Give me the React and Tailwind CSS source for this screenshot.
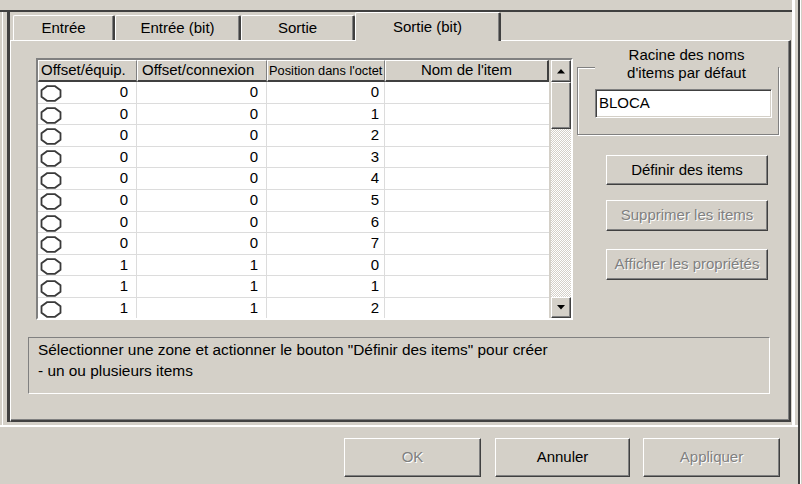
const rows = [
  [0, 0, 0],
  [0, 0, 1],
  [0, 0, 2],
  [0, 0, 3],
  [0, 0, 4],
  [0, 0, 5],
  [0, 0, 6],
  [0, 0, 7],
  [1, 1, 0],
  [1, 1, 1],
  [1, 1, 2],
];

const raised =
  "bg-[#d4d0c8] border-t border-l border-t-white border-l-white border-r border-b border-r-[#404040] border-b-[#404040] shadow-[inset_-1px_-1px_0_#808080]";

const disabledText = "text-[#808080] [text-shadow:1px_1px_0_#ffffff]";

function Octagon() {
  return (
    <svg width="22" height="17" viewBox="0 0 22 17" className="shrink-0">
      <polygon
        points="7,1.2 15,1.2 20.5,5.2 20.5,11.8 15,15.8 7,15.8 1.5,11.8 1.5,5.2"
        fill="#ffffff"
        stroke="#3a3a3a"
        strokeWidth="1.8"
      />
    </svg>
  );
}

function Arrow({ down }) {
  return (
    <svg width="8" height="5" viewBox="0 0 8 5">
      {down ? (
        <polygon points="0,0 8,0 4,4.5" fill="#000" />
      ) : (
        <polygon points="0,4.5 8,4.5 4,0" fill="#000" />
      )}
    </svg>
  );
}

function Tab({ label, className }) {
  return (
    <div
      className={`flex items-center justify-center bg-[#d4d0c8] border-t border-l border-t-white border-l-white border-r-2 border-r-[#404040] shadow-[inset_-1px_0_0_#808080] rounded-t-[2px] ${className}`}
    >
      {label}
    </div>
  );
}

export default function App() {
  return (
    <div className="flex w-[802px] h-[484px] overflow-hidden bg-[#d4d0c8] text-black text-[15px] font-['Liberation_Sans',Arial,sans-serif]">
      {/* main column */}
      <div className="flex flex-col w-[798px]">
        {/* top area with tab control */}
        <div className="flex h-[427px] border-b-2 border-b-white">
          <div className="w-[792px] pt-[10px]">
            <div className="flex h-[415px] border-t-2 border-t-[#404040]">
              <div className="w-[2px]" />
              <div className="w-px bg-white" />
              <div className="w-[4px]" />
              <div className="w-[3px] h-[410px] bg-[#404040]" />

              <div className="flex flex-col w-[782px]">
                {/* tabs */}
                <div className="flex items-start h-[28px] pl-[3px]">
                  <Tab label="Entrée" className="w-[102px] h-[25px] mt-[3px]" />
                  <Tab label="Entrée (bit)" className="w-[126px] h-[25px] mt-[3px]" />
                  <Tab label="Sortie" className="w-[114px] h-[25px] mt-[3px]" />
                  <Tab label="Sortie (bit)" className="relative z-10 w-[146px] h-[29px]" />
                </div>

                {/* panel */}
                <div className="w-[781px] h-[382px] border-t border-l border-t-white border-l-white border-r-2 border-b-2 border-r-[#404040] border-b-[#404040] shadow-[inset_-1px_-1px_0_#808080]">
                  <div className="flex items-start pt-[5px] pl-[25px]">
                    {/* list */}
                    <div className="mt-[12px] w-[537px] h-[262px] flex border-t-2 border-l-2 border-t-[#808080] border-l-[#808080] border-r-2 border-b-2 border-r-white border-b-white bg-white">
                      <div className="flex flex-col w-[511px]">
                        <div className="flex h-[22px] bg-[#d4d0c8]">
                          <div className="w-[99px] pl-[2px] flex items-center border-t border-l border-t-white border-l-white border-r border-r-[#808080] border-b-2 border-b-[#404040] whitespace-nowrap">
                            Offset/équip.
                          </div>
                          <div className="w-[130px] pl-[4px] flex items-center border-t border-l border-t-white border-l-white border-r border-r-[#808080] border-b-2 border-b-[#404040] whitespace-nowrap">
                            Offset/connexion
                          </div>
                          <div className="w-[118px] pl-[1px] flex items-center border-t border-l border-t-white border-l-white border-r border-r-[#808080] border-b-2 border-b-[#404040] whitespace-nowrap text-[12.8px] overflow-hidden">
                            Position dans l'octet
                          </div>
                          <div className="w-[164px] flex items-center justify-center border-t border-l border-t-white border-l-white border-r-2 border-r-[#404040] border-b-2 border-b-[#404040] whitespace-nowrap">
                            Nom de l'item
                          </div>
                        </div>
                        <div className="h-[236px] overflow-hidden">
                          {rows.map((r, i) => (
                            <div key={i} className="flex h-[21.6px] border-b border-b-[#dcdcdc]">
                              <div className="w-[99px] flex items-center justify-between pl-[2px] pr-[8px] border-r border-r-[#dcdcdc]">
                                <span className="mt-[3px]">
                                  <Octagon />
                                </span>
                                <span>{r[0]}</span>
                              </div>
                              <div className="w-[130px] flex items-center justify-end pr-[8px] border-r border-r-[#dcdcdc]">
                                {r[1]}
                              </div>
                              <div className="w-[118px] flex items-center justify-end pr-[5px] border-r border-r-[#dcdcdc]">
                                {r[2]}
                              </div>
                              <div className="w-[164px]" />
                            </div>
                          ))}
                        </div>
                      </div>
                      {/* scrollbar */}
                      <div className="flex flex-col w-[22px] pl-[2px] bg-[#d4d0c8]">
                        <div className={`${raised} h-[22px] flex items-center justify-center`}>
                          <Arrow />
                        </div>
                        <div className="flex-1 flex flex-col bg-[repeating-conic-gradient(#ffffff_0_25%,#d4d0c8_0_50%)] bg-[length:2px_2px]">
                          <div className={`${raised} h-[47px]`} />
                        </div>
                        <div className={`${raised} h-[21px] flex items-center justify-center`}>
                          <Arrow down />
                        </div>
                      </div>
                    </div>

                    {/* right column */}
                    <div className="ml-[4px] w-[201px] flex flex-col">
                      <fieldset className="w-[201px] border border-[#808080] shadow-[inset_1px_1px_0_#ffffff,1px_1px_0_#ffffff] pl-[17px] pb-[16px]">
                        <legend className="mx-auto w-[183px] text-center leading-[18px] pb-[6px] bg-[#d4d0c8]">
                          Racine des noms
                          <br />
                          d'items par défaut
                        </legend>
                        <div className="mt-[1px] w-[177px] h-[29px] flex items-center pl-[3px] bg-white border-t border-l border-t-[#808080] border-l-[#808080] border-r border-b border-r-white border-b-white shadow-[inset_1px_1px_0_#404040,inset_-1px_-1px_0_#d4d0c8]">
                          BLOCA
                        </div>
                      </fieldset>
                      <div className={`${raised} ml-[29px] mt-[20px] w-[162px] h-[30px] flex items-center justify-center`}>
                        Définir des items
                      </div>
                      <div className={`${raised} ${disabledText} ml-[29px] mt-[15px] w-[162px] h-[31px] flex items-center justify-center`}>
                        Supprimer les items
                      </div>
                      <div className={`${raised} ${disabledText} ml-[29px] mt-[18px] w-[162px] h-[31px] flex items-center justify-center`}>
                        Afficher les propriétés
                      </div>
                    </div>
                  </div>

                  {/* message */}
                  <div className="mt-[17px] ml-[17px] w-[742px] h-[57px] border-t border-l border-t-[#808080] border-l-[#808080] border-r border-b border-r-white border-b-white pl-[9px] pt-[1px] leading-[21px] text-[15.4px]">
                    <div>Sélectionner une zone et actionner le bouton "Définir des items" pour créer</div>
                    <div>- un ou plusieurs items</div>
                  </div>
                </div>
              </div>
            </div>
          </div>
          <div className="w-[3px] bg-white" />
        </div>

        {/* bottom buttons */}
        <div className="flex pt-[11px] pl-[344px]">
          <div className={`${raised} ${disabledText} w-[137px] h-[39px] flex items-center justify-center`}>
            OK
          </div>
          <div className={`${raised} ml-[14px] w-[135px] h-[39px] flex items-center justify-center`}>
            Annuler
          </div>
          <div className={`${raised} ${disabledText} ml-[13px] w-[137px] h-[39px] flex items-center justify-center`}>
            Appliquer
          </div>
        </div>
      </div>
      <div className="w-[2px] bg-[#404040]" />
      <div className="w-px bg-white" />
    </div>
  );
}
